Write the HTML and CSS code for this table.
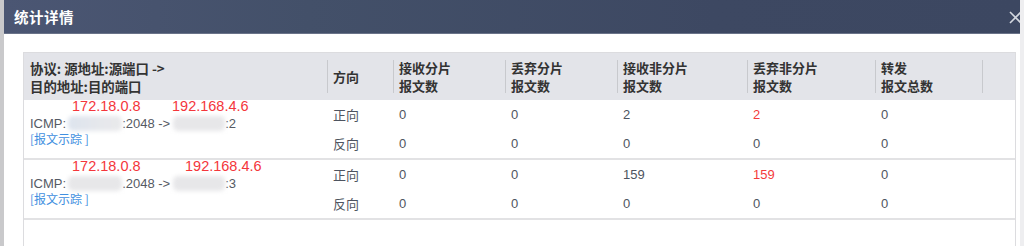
FILE: index.html
```html
<!DOCTYPE html>
<html lang="zh">
<head>
<meta charset="utf-8">
<title>统计详情</title>
<link rel="stylesheet" href="styles.css">
</head>
<body>
<div class="dialog">
  <div class="dialog-head">
    <span class="dialog-title">统计详情</span>
    <svg class="close" width="13" height="13" viewBox="0 0 13 13"><path d="M1 1 L12 12 M12 1 L1 12" stroke="#d3d7df" stroke-width="1.6" fill="none"/></svg>
  </div>
  <div class="dialog-body">
    <div class="grid-box">
      <table class="stats">
        <colgroup>
          <col class="c1"><col class="c2"><col class="c3"><col class="c4"><col class="c5"><col class="c6"><col class="c7"><col class="c8">
        </colgroup>
        <thead>
          <tr>
            <th>协议: 源地址:源端口 -&gt;<br>目的地址:目的端口</th>
            <th class="sep">方向</th>
            <th class="sep">接收分片<br>报文数</th>
            <th class="sep">丢弃分片<br>报文数</th>
            <th class="sep">接收非分片<br>报文数</th>
            <th class="sep">丢弃非分片<br>报文数</th>
            <th class="sep">转发<br>报文总数</th>
            <th class="sep"></th>
          </tr>
        </thead>
        <tbody>
          <tr>
            <td rowspan="2" class="flow">
              <div class="flow-box">
                <span class="note note-src">172.18.0.8</span>
                <span class="note note-dst">192.168.4.6</span>
                <div class="flow-line">ICMP:<span class="blur b1 tint"></span>:2048 -&gt;<span class="blur b2"></span>:2</div>
                <a class="trace" href="#">[报文示踪 ]</a>
              </div>
            </td>
            <td>正向</td><td>0</td><td>0</td><td>2</td><td class="hot">2</td><td>0</td><td></td>
          </tr>
          <tr class="last">
            <td>反向</td><td>0</td><td>0</td><td>0</td><td>0</td><td>0</td><td></td>
          </tr>
          <tr>
            <td rowspan="2" class="flow">
              <div class="flow-box">
                <span class="note note-src">172.18.0.8</span>
                <span class="note note-dst2">192.168.4.6</span>
                <div class="flow-line">ICMP:<span class="blur b1"></span>.2048 -&gt;<span class="blur b2"></span>:3</div>
                <a class="trace" href="#">[报文示踪 ]</a>
              </div>
            </td>
            <td>正向</td><td>0</td><td>0</td><td>159</td><td class="hot">159</td><td>0</td><td></td>
          </tr>
          <tr class="last">
            <td>反向</td><td>0</td><td>0</td><td>0</td><td>0</td><td>0</td><td></td>
          </tr>
        </tbody>
      </table>
    </div>
  </div>
</div>
</body>
</html>
```

FILE: styles.css
```css
html, body {
  margin: 0;
  padding: 0;
  height: 100%;
}
body {
  background: #c9c9cb;
  font-family: "Liberation Sans", "Noto Sans CJK SC", sans-serif;
  overflow: hidden;
}
.dialog {
  margin-left: 4px;
  width: 1016px;
  height: 246px;
  background: #fff;
  box-shadow: 4px 0 0 #eeeef0;
}
.dialog-head {
  height: 33px;
  border-bottom: 1px solid #6a7389;
  background: linear-gradient(to right, #4b5673 0%, #435069 30%, #3d4862 70%, #3c4761 100%);
  display: flex;
  align-items: center;
  justify-content: space-between;
  padding-left: 10px;
  overflow: hidden;
}
.dialog-title {
  color: #fff;
  font-family: "Noto Sans CJK SC", sans-serif;
  font-weight: bold;
  font-size: 14.5px;
  letter-spacing: 0.5px;
}
.close {
  margin-right: -2px;
  margin-top: 1px;
}
.dialog-body {
  padding: 18px 4px 0 19px;
}
.grid-box {
  border: 1px solid #dcdcdf;
  border-bottom: none;
  height: 200px;
  width: 991px;
}
.stats {
  border-collapse: collapse;
  table-layout: fixed;
  width: 991px;
}
.c1 { width: 303px; }
.c2 { width: 66px; }
.c3 { width: 112px; }
.c4 { width: 112px; }
.c5 { width: 130px; }
.c6 { width: 128px; }
.c7 { width: 107px; }
.c8 { width: 33px; }
.stats th {
  background: #e3e4e9;
  height: 47px;
  padding: 0 0 0 6px;
  text-align: left;
  font-family: "Noto Sans CJK SC", sans-serif;
  font-weight: bold;
  font-size: 13px;
  line-height: 18px;
  color: #333;
  position: relative;
  vertical-align: middle;
}
.stats th:first-child {
  font-size: 13.4px;
}
.stats th.sep::before {
  content: "";
  position: absolute;
  left: 0;
  top: 7px;
  bottom: 7px;
  width: 1px;
  background: #c8c9cd;
}
.stats td {
  height: 29px;
  padding: 0 0 0 6px;
  font-size: 13px;
  color: #4e5460;
  vertical-align: middle;
}
.stats td:first-child:not(.flow),
.stats td.flow + td {
  font-family: "Noto Sans CJK SC", sans-serif;
}
.stats tr.last td {
  border-bottom: 2px solid #e2e2e4;
}
.stats td.flow {
  border-bottom: 2px solid #e2e2e4;
  vertical-align: middle;
  padding-top: 3px;
}
.stats td.hot {
  color: #f43b3b;
}
.flow-box {
  position: relative;
}
.flow-line {
  font-size: 13px;
  line-height: 15px;
  color: #555a64;
  white-space: nowrap;
}
.blur {
  display: inline-block;
  height: 15px;
  vertical-align: -3px;
  background: #e7e7e9;
  border-radius: 5px;
  filter: blur(2px);
}
.b1 { width: 54px; margin-left: 2px; }
.b2 { width: 52px; margin-left: 3px; }
.tint {
  background: linear-gradient(to right, #dde4ee, #e6e8ec 60%, #e9e9eb);
}
.trace {
  display: block;
  font-family: "Noto Sans CJK SC", sans-serif;
  font-size: 12px;
  line-height: 15px;
  color: #3f8fe0;
  text-decoration: none;
}
.note {
  position: absolute;
  top: -17px;
  font-size: 14.5px;
  line-height: 15px;
  color: #f4363b;
  white-space: nowrap;
}
.note-src { left: 42px; }
.note-dst { left: 142px; }
.note-dst2 { left: 155px; }
```
